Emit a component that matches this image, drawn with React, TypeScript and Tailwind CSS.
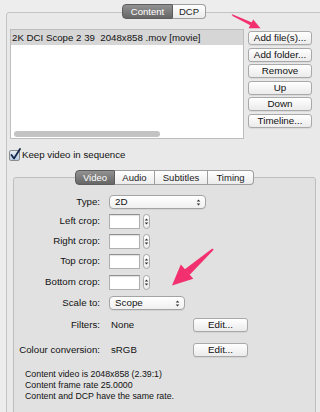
const tabBase = "flex items-center justify-center border-y border-r text-[9.5px] leading-none";

function Segmented({ items, active }: { items: { label: string; w: string }[]; active: number }) {
  return (
    <div className="flex h-[15px]">
      {items.map((it, i) => (
        <div
          key={it.label}
          className={`${tabBase} ${it.w} ${i === 0 ? "rounded-l-[4px] border-l" : ""} ${
            i === items.length - 1 ? "rounded-r-[4px]" : ""
          } ${
            i === active
              ? "border-[#5c5c5c] bg-linear-to-b from-[#929292] to-[#666666] text-white"
              : "border-[#9e9e9e] bg-linear-to-b from-white to-[#ebebeb] text-[#1a1a1a]"
          }`}
        >
          {it.label}
        </div>
      ))}
    </div>
  );
}

function Btn({ children, w = "w-full" }: { children: string; w?: string }) {
  return (
    <div
      className={`flex h-[14px] ${w} items-center justify-center rounded-[3px] border border-[#a9a9a9] bg-linear-to-b from-white to-[#ebebeb] text-[9.8px] leading-none text-[#111] shadow-[0_1px_0_rgba(0,0,0,0.06)]`}
    >
      {children}
    </div>
  );
}

function Arrows() {
  return (
    <svg className="h-[7px] w-[5px]" viewBox="0 0 5 7">
      <path d="M2.5 0.5 L4.3 2.6 L0.7 2.6 Z M2.5 6.5 L4.3 4.4 L0.7 4.4 Z" fill="#333" />
    </svg>
  );
}

function Select({ value, w }: { value: string; w: string }) {
  return (
    <div
      className={`flex h-[14px] ${w} items-center justify-between rounded-[4px] border border-[#a3a3a3] bg-linear-to-b from-white to-[#f0f0f0] pl-[5px] pr-[4px] text-[9.8px] leading-none shadow-[0_1px_0_rgba(0,0,0,0.06)]`}
    >
      <span>{value}</span>
      <Arrows />
    </div>
  );
}

function CropInput() {
  return (
    <div className="flex items-center">
      <div className="h-[15px] w-[31px] border border-[#b0b0b0] border-t-[#8f8f8f] bg-white shadow-[inset_0_1px_1px_rgba(0,0,0,0.12)]" />
      <div className="ml-[3px] flex h-[15px] w-[7px] items-center justify-center rounded-full border border-[#a8a8a8] bg-linear-to-b from-white to-[#ececec]">
        <Arrows />
      </div>
    </div>
  );
}

function Row({ label, mt, children }: { label: string; mt: string; children: React.ReactNode }) {
  return (
    <div className={`flex h-[16px] items-center ${mt}`}>
      <div className="w-[87px] pr-[1px] text-right">{label}</div>
      <div className="ml-[8px] flex items-center">{children}</div>
    </div>
  );
}

export default function App() {
  return (
    <div className="relative h-[412px] w-[320px] overflow-hidden bg-[#ededed] font-['Liberation_Sans',Arial,sans-serif] text-[9.7px] text-[#111]">
      <div className="pl-[6px] pt-[12px]">
        <div className="h-[420px] w-[316px] rounded-[3px] border border-[#c4c4c4] bg-[#e9e9e9]">
          <div className="-mt-[9px] flex justify-center">
            <Segmented
              active={0}
              items={[
                { label: "Content", w: "w-[51px]" },
                { label: "DCP", w: "w-[33px]" },
              ]}
            />
          </div>

          <div className="mt-[10px] flex pl-[3px]">
            <div className="flex h-[110px] w-[234px] flex-col border border-[#bdbdbd] bg-white">
              <div className="flex h-[15px] items-center whitespace-pre bg-[#d6d6d6] pl-[1px] leading-none">
                2K DCI Scope 2 39  2048x858 .mov [movie]
              </div>
              <div className="flex-1" />
              <div className="pb-[1px] pl-[3px]">
                <div className="h-[6px] w-[146px] rounded-full bg-[#c3c3c3]" />
              </div>
            </div>
            <div className="ml-[4px] mt-[2px] flex w-[64px] flex-col gap-[2.5px]">
              <Btn>Add file(s)...</Btn>
              <Btn>Add folder...</Btn>
              <Btn>Remove</Btn>
              <Btn>Up</Btn>
              <Btn>Down</Btn>
              <Btn>Timeline...</Btn>
            </div>
          </div>

          <div className="mt-[10px] flex h-[12px] items-center pl-[2px]">
            <div className="relative h-[11px] w-[11px] rounded-[2px] border border-[#8c8c8c] bg-linear-to-b from-[#e6edf5] to-[#b9cce2]">
              <svg className="absolute -top-[3px] left-[0px] h-[12px] w-[11px]" viewBox="0 0 11 12">
                <path d="M1.5 7 L4 10.5 L10 1" fill="none" stroke="#13284a" strokeWidth="1.8" strokeLinecap="round" strokeLinejoin="round" />
              </svg>
            </div>
            <span className="ml-[2px] leading-none">Keep video in sequence</span>
          </div>

          <div className="ml-[6px] mt-[16px] h-[260px] w-[303px] rounded-[3px] border border-[#bebebe] bg-[#e1e1e1]">
            <div className="-mt-[8px] flex justify-center">
              <Segmented
                active={0}
                items={[
                  { label: "Video", w: "w-[40px]" },
                  { label: "Audio", w: "w-[40px]" },
                  { label: "Subtitles", w: "w-[53px]" },
                  { label: "Timing", w: "w-[46px]" },
                ]}
              />
            </div>

            <Row label="Type:" mt="mt-[9px]">
              <Select value="2D" w="w-[97px]" />
            </Row>
            <Row label="Left crop:" mt="mt-[3px]">
              <CropInput />
            </Row>
            <Row label="Right crop:" mt="mt-[4px]">
              <CropInput />
            </Row>
            <Row label="Top crop:" mt="mt-[4px]">
              <CropInput />
            </Row>
            <Row label="Bottom crop:" mt="mt-[5px]">
              <CropInput />
            </Row>
            <Row label="Scale to:" mt="mt-[5px]">
              <Select value="Scope" w="w-[76px]" />
            </Row>
            <Row label="Filters:" mt="mt-[6px]">
              <span className="w-[84px] pl-[2px]">None</span>
              <Btn w="w-[55px]">Edit...</Btn>
            </Row>
            <Row label="Colour conversion:" mt="mt-[9px]">
              <span className="w-[84px] pl-[2px]">sRGB</span>
              <Btn w="w-[55px]">Edit...</Btn>
            </Row>

            <div className="mt-[11px] pl-[11px] text-[8.8px] leading-[11px]">
              <div>Content video is 2048x858 (2.39:1)</div>
              <div>Content frame rate 25.0000</div>
              <div>Content and DCP have the same rate.</div>
            </div>
          </div>
        </div>
      </div>

      <svg className="pointer-events-none absolute inset-0 h-[412px] w-[320px]" viewBox="0 0 320 412">
        <polygon points="231.6,14 232.6,16 251.2,25.8 252.6,22.7" fill="#f2306f" />
        <polygon points="260.5,28.2 248.6,28.2 253.2,19.4" fill="#f2306f" />
        <polygon points="212.3,248.4 213.7,249.8 189.5,275 184.5,269.5" fill="#f2306f" />
        <polygon points="172,285.5 180.8,264.6 193.3,278.8" fill="#f2306f" />
      </svg>
    </div>
  );
}
